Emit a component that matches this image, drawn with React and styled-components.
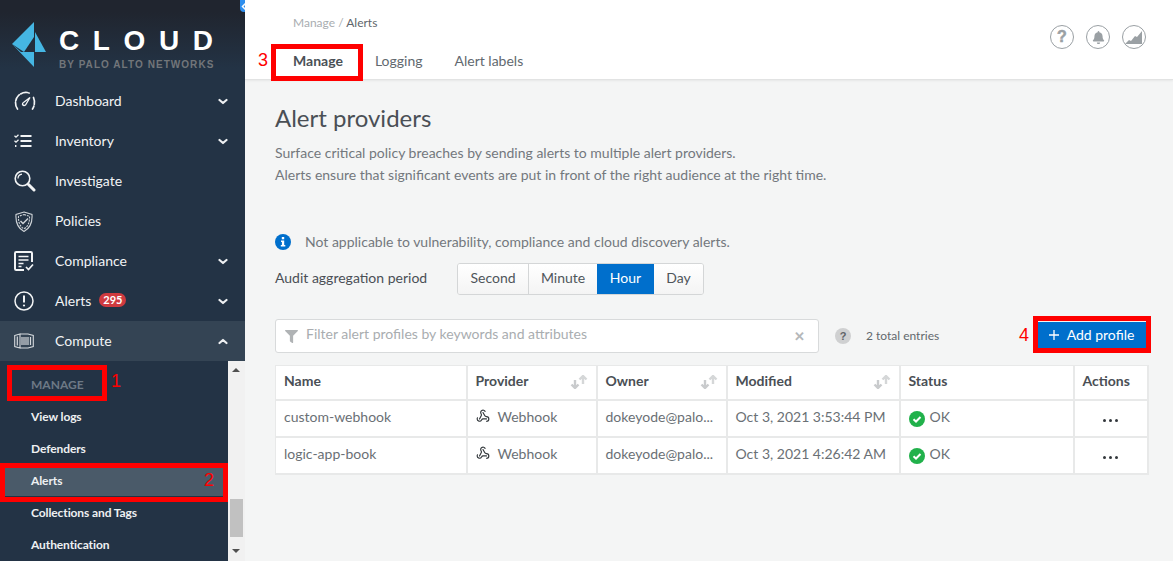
import React from "react";
import styled, { createGlobalStyle } from "styled-components";
import { FaFilter, FaBell } from "react-icons/fa";
import { Webhook } from "lucide-react";

const GlobalStyle = createGlobalStyle`
  html, body { margin: 0; padding: 0; height: 100%; overflow: hidden; }
  body { font-family: Lato, "Noto Sans", sans-serif; background: #f4f5f5; }
  * { box-sizing: border-box; }
`;

const Page = styled.div`
  position: relative;
  display: flex;
  width: 1173px;
  height: 561px;
  overflow: hidden;
`;

// sidebar
const Sidebar = styled.aside`
  width: 245px;
  flex: none;
  display: flex;
  flex-direction: column;
  background: #233345;
  color: #fff;
`;
const LogoArea = styled.div`
  height: 81px;
  flex: none;
  display: flex;
  gap: 12px;
  padding: 22px 0 0 12px;
  background: linear-gradient(#20252f 0%, #20252f 15%, #233345 85%);
`;
const LogoWords = styled.div`
  display: flex;
  flex-direction: column;
  padding-top: 5px;
`;
const LogoName = styled.div`
  font-family: "Liberation Sans", sans-serif;
  font-weight: 700;
  font-size: 28px;
  line-height: 28px;
  letter-spacing: 13.6px;
`;
const LogoSub = styled.div`
  font-family: "Liberation Sans", sans-serif;
  font-weight: 700;
  font-size: 10px;
  line-height: 12px;
  margin-top: 4px;
  letter-spacing: 1.05px;
  color: #72767a;
  white-space: nowrap;
`;
const NavRow = styled.div`
  height: 40px;
  flex: none;
  display: flex;
  align-items: center;
  padding: 0 17px 0 14px;
  font-size: 14px;
  color: #f2f4f5;
  background: ${(p) => (p.$open ? "#344454" : "transparent")};
`;
const NavIcon = styled.span`
  width: 41px;
  flex: none;
  display: flex;
  align-items: center;
`;
const NavLabel = styled.span`
  flex: 1;
  display: flex;
  align-items: center;
  gap: 8px;
  padding-bottom: 2px;
`;
const Badge = styled.span`
  background: #cf3a3f;
  color: #fff;
  font-size: 11px;
  font-weight: 700;
  line-height: 14px;
  padding: 0 4px;
  border-radius: 7px;
`;
const SubArea = styled.div`
  flex: 1;
  display: flex;
  min-height: 0;
`;
const SubList = styled.div`
  flex: 1;
  padding-top: 7px;
`;
const SubHead = styled.div`
  height: 32px;
  display: flex;
  align-items: center;
  padding-left: 31px;
  font-size: 12px;
  font-weight: 700;
  color: #6d7985;
`;
const SubItem = styled.div`
  height: 32px;
  display: flex;
  align-items: center;
  padding-left: 31px;
  font-size: 12px;
  font-weight: 700;
  letter-spacing: -0.1px;
  color: #eef0f2;
  background: ${(p) => (p.$active ? "#4a5a69" : "transparent")};
`;
const ScrollTrack = styled.div`
  position: relative;
  width: 17px;
  flex: none;
  background: #f1f1f1;
`;
const ScrollThumb = styled.div`
  position: absolute;
  left: 2px;
  right: 2px;
  bottom: 24px;
  height: 38px;
  background: #c1c1c1;
`;
const ScrollArrow = styled.div`
  position: absolute;
  left: 4px;
  width: 0;
  height: 0;
  border-left: 4px solid transparent;
  border-right: 4px solid transparent;
  ${(p) =>
    p.$down
      ? "bottom: 8px; border-top: 4px solid #505050;"
      : "top: 7px; border-bottom: 4px solid #505050;"}
`;
const Collapse = styled.div`
  position: absolute;
  left: 240px;
  top: 0;
  width: 8px;
  height: 12px;
  background: #2f8fee;
  border-radius: 0 0 4px 4px;
  display: flex;
  align-items: center;
  justify-content: center;
`;

// main column
const Main = styled.main`
  flex: 1;
  min-width: 0;
  display: flex;
  flex-direction: column;
`;
const Header = styled.header`
  position: relative;
  height: 80px;
  flex: none;
  background: #fff;
  border-bottom: 1px solid #e2e3e3;
  box-shadow: 0 1px 2px rgba(0, 0, 0, 0.06);
  padding: 15px 27px 0 48px;
  display: flex;
  justify-content: space-between;
`;
const Crumbs = styled.div`
  font-size: 12px;
  line-height: 15px;
  color: #a9adb1;
  b { font-weight: 400; color: #5f666c; }
`;
const Tabs = styled.nav`
  display: flex;
  gap: 32px;
  margin-top: 22px;
`;
const Tab = styled.span`
  font-size: 14px;
  line-height: 18px;
  font-weight: ${(p) => (p.$active ? 700 : 400)};
  color: ${(p) => (p.$active ? "#4a5056" : "#62696f")};
`;
const HeaderIcons = styled.div`
  display: flex;
  gap: 12px;
  margin-top: 10px;
`;
const RoundIcon = styled.span`
  width: 24px;
  height: 24px;
  border-radius: 50%;
  border: 1px solid #9aa0a4;
  color: #9aa0a4;
  display: flex;
  align-items: center;
  justify-content: center;
  font-family: "Liberation Sans", sans-serif;
  font-size: 16px;
  font-weight: 700;
  -webkit-text-stroke: 0.5px #9aa0a4;
  overflow: hidden;
`;
const Content = styled.section`
  flex: 1;
  padding: 23px 25px 0 30px;
  color: #6d7378;
`;
const Title = styled.h1`
  margin: 0;
  font-size: 24px;
  line-height: 30px;
  font-weight: 400;
  color: #4a4f55;
`;
const Lead = styled.p`
  margin: 9px 0 0;
  font-size: 14px;
  line-height: 22px;
  color: #73787d;
`;
const InfoLine = styled.div`
  display: flex;
  align-items: center;
  gap: 14px;
  margin-top: 46px;
  font-size: 14px;
  line-height: 20px;
  color: #73787d;
`;
const PeriodRow = styled.div`
  display: flex;
  align-items: center;
  margin-top: 11px;
  font-size: 14px;
  color: #4a4f55;
`;
const PeriodLabel = styled.span`
  width: 182px;
  padding-bottom: 3px;
`;
const Segments = styled.div`
  display: flex;
  height: 32px;
  border: 1px solid #d4d6d7;
  border-radius: 3px;
  overflow: hidden;
`;
const Segment = styled.span`
  display: flex;
  align-items: center;
  justify-content: center;
  width: ${(p) => p.$w}px;
  padding-bottom: 3px;
  font-size: 14px;
  color: ${(p) => (p.$on ? "#fff" : "#4f555a")};
  background: ${(p) => (p.$on ? "#006fcc" : "linear-gradient(#fff, #f4f4f4)")};
  border-left: ${(p) => (p.$first || p.$on ? "none" : "1px solid #d4d6d7")};
`;
const Toolbar = styled.div`
  display: flex;
  align-items: center;
  margin-top: 24px;
  height: 34px;
`;
const Filter = styled.div`
  width: 544px;
  height: 34px;
  flex: none;
  display: flex;
  align-items: center;
  gap: 8px;
  padding: 0 13px 0 9px;
  background: #fff;
  border: 1px solid #d8dadb;
  border-radius: 3px;
  font-size: 14px;
  color: #a9adb0;
`;
const FilterText = styled.span`
  flex: 1;
  padding-bottom: 5px;
`;
const FilterClear = styled.span`
  font-size: 13px;
  font-weight: 900;
  color: #b5b8ba;
`;
const HelpDot = styled.span`
  width: 16px;
  height: 16px;
  margin-left: 16px;
  border-radius: 50%;
  background: #cfd0d1;
  color: #5f6468;
  font-family: "Liberation Sans", sans-serif;
  font-size: 11px;
  font-weight: 700;
  display: flex;
  align-items: center;
  justify-content: center;
`;
const Total = styled.span`
  margin-left: 15px;
  flex: 1;
  padding-bottom: 1px;
  font-size: 12px;
  color: #62686d;
`;
const AddButton = styled.button`
  width: 109px;
  height: 29px;
  margin-right: 2px;
  border: none;
  background: #006fcc;
  color: #fff;
  font-family: inherit;
  font-size: 14px;
  display: flex;
  align-items: center;
  justify-content: center;
  gap: 8px;
  padding: 0 0 2px;
`;
const AddLabel = styled.span`
  padding-bottom: 2px;
`;
const Table = styled.table`
  width: 872px;
  margin-top: 12px;
  table-layout: fixed;
  border-collapse: collapse;
  background: #fff;
  font-size: 14px;
  color: #6a7075;
`;
const Th = styled.th`
  height: 34px;
  padding: 0 8px 3px;
  border: 1px solid #e8e9e9;
  border-width: 1px 2px 2px 1px;
  text-align: left;
  font-weight: 700;
  color: #4a4f55;
  width: ${(p) => p.$w}px;
`;
const ThInner = styled.span`
  display: flex;
  align-items: center;
  justify-content: space-between;
`;
const SortWrap = styled.span`
  display: flex;
  padding-top: 3px;
`;
const Td = styled.td`
  height: 37px;
  padding: 0 8px 4px;
  border: 1px solid #e8e9e9;
  border-width: 1px 2px 2px 1px;
  white-space: nowrap;
  overflow: hidden;
  text-overflow: ellipsis;
  text-align: ${(p) => (p.$center ? "center" : "left")};
`;
const Cell = styled.span`
  display: flex;
  align-items: center;
  gap: ${(p) => p.$gap}px;
`;
const StatusMark = styled.span`
  display: flex;
  margin-top: 5px;
`;
const Dots = styled.span`
  display: inline-flex;
  gap: 3px;
  i { width: 3px; height: 3px; border-radius: 50%; background: #33383c; }
`;

// annotations drawn over the screenshot
const RedBox = styled.div`
  position: absolute;
  left: ${(p) => p.$x}px;
  top: ${(p) => p.$y}px;
  width: ${(p) => p.$w}px;
  height: ${(p) => p.$h}px;
  border: 5px solid #ff0000;
`;
const RedNum = styled.span`
  position: absolute;
  left: ${(p) => p.$x}px;
  top: ${(p) => p.$y}px;
  font-family: "Liberation Sans", sans-serif;
  font-size: 18px;
  line-height: 20px;
  color: #ff0000;
`;

const Chevron = ({ up }) => (
  <svg width="10" height="7" viewBox="0 0 10 7" fill="none" stroke="#eef0f2" strokeWidth="2.2" strokeLinecap="round" strokeLinejoin="round">
    <path d={up ? "M1.500 5L5 2l3.500 3" : "M1.500 2L5 5l3.500-3"} />
  </svg>
);

const LogoMark = () => (
  <svg width="35" height="46" viewBox="0 0 35 46">
    <path fill="#45b6e3" d="M0 22L22 0v15L12 30z" />
    <path fill="#45b6e3" d="M23 10l11 20H23z" />
    <path fill="#45b6e3" d="M0 22l9 8h13v15z" />
  </svg>
);

const GaugeIcon = () => (
  <svg width="22" height="20" viewBox="0 0 22 20" fill="none" stroke="#f2f4f5" strokeWidth="1.700" strokeLinecap="round">
    <path d="M3.500 18C.5 14 1 8 4.500 4.500S13 1 15 2M19.500 6.500c1.500 3.500 1.300 8-1 11.500" strokeDasharray="7 1.600" />
    <path d="M8.500 13.500a2.200 2.200 0 0 0 3 .5l4.500-7.500-6.500 5a2 2 0 0 0-1 2z" strokeWidth="1.300" />
  </svg>
);
const ListIcon = () => (
  <svg width="18" height="14" viewBox="0 0 18 14" fill="none" stroke="#f2f4f5" strokeWidth="2">
    <path d="M6.500 2H17.500M6.500 7H17.500M6.500 12H17.500" />
    <path d="M.5 1.800L2 3.200 4.500.8" strokeWidth="1.300" />
    <path d="M.5 6.800L2 8.200 4.500 5.800" strokeWidth="1.300" />
    <path d="M1 12h2" strokeDasharray="1.400 1" />
  </svg>
);
const SearchIcon = () => (
  <svg width="22" height="22" viewBox="0 0 22 22" fill="none" stroke="#f2f4f5">
    <circle cx="8.500" cy="8.500" r="7.300" strokeWidth="1.600" />
    <path d="M4 8.500a4.500 4.500 0 0 1 4-4.400" strokeWidth="1.200" />
    <path d="M14.500 14.500l5.500 5.500" strokeWidth="3" strokeLinecap="round" />
  </svg>
);
const ShieldIcon = () => (
  <svg width="20" height="21" viewBox="0 0 20 21" fill="none" stroke="#cfd4d8" strokeWidth="1.100">
    <path d="M10 1l8 2.500c.5 7-1.500 13.500-8 17C3.500 17 1.500 10.500 2 3.500z" />
    <path d="M10 3.500l5.500 1.800c.3 5-1 10-5.500 12.500C5.500 15.300 4.200 10.300 4.500 5.300z" strokeDasharray="2 1" />
    <path d="M6.500 10l2.500 2.500L14 7.500" strokeWidth="1.500" />
  </svg>
);
const ComplianceIcon = () => (
  <svg width="20" height="20" viewBox="0 0 20 20" fill="none" stroke="#f2f4f5">
    <path d="M10 19H2.200A1.200 1.200 0 0 1 1 17.800V2.200A1.200 1.200 0 0 1 2.200 1h14.600A1.200 1.200 0 0 1 18 2.200V11" strokeWidth="2" />
    <path d="M4.500 5.500h10M4.500 9h10M4.500 12.500h5M4.500 15.500h3" strokeWidth="1.700" />
    <path d="M12 16l2.500 2.500L19 13.500" strokeWidth="1.700" />
  </svg>
);
const AlertIcon = () => (
  <svg width="20" height="20" viewBox="0 0 20 20" fill="none" stroke="#f2f4f5">
    <circle cx="10" cy="10" r="9" strokeWidth="1.500" />
    <path d="M10 4.500v7" strokeWidth="2" />
    <circle cx="10" cy="14.500" r="1.100" fill="#f2f4f5" stroke="none" />
  </svg>
);
const ContainerIcon = () => (
  <svg width="20" height="16" viewBox="0 0 20 16" fill="none" stroke="#d5d9dd" strokeWidth="1.100">
    <path d="M.7 2.500L6 1v14l-5.300-1.500zM6 1h8l5.300 1.500v11L14 15H6" />
    <path d="M8 4v8M10 4v8M12 4v8M14 4v8M16.500 4v8M3.300 3.500v9" strokeWidth="1.200" />
  </svg>
);

const SortIcon = () => (
  <svg width="18" height="14" viewBox="0 0 18 14" fill="none" strokeWidth="2.400">
    <path d="M5 5v8M1.500 9.500L5 13l3.500-3.500" stroke="#c9cbcd" />
    <path d="M13 9V1M9.500 4.500L13 1l3.500 3.500" stroke="#d5d7d8" />
  </svg>
);
const OkIcon = () => (
  <svg width="16" height="16" viewBox="0 0 16 16">
    <circle cx="8" cy="8" r="8" fill="#21b14b" />
    <path d="M4.500 8.200l2.500 2.300 4.500-4.500" fill="none" stroke="#fff" strokeWidth="2" />
  </svg>
);
const InfoIcon = () => (
  <svg width="16" height="16" viewBox="0 0 16 16">
    <circle cx="8" cy="8" r="8" fill="#006fcc" />
    <rect x="6.800" y="3" width="2.400" height="2.300" fill="#fff" />
    <path d="M6 6.500h3.200V11H10.300v1.500H5.800V11H6.900V8H6z" fill="#fff" />
  </svg>
);
const AreaIcon = () => (
  <svg width="22" height="22" viewBox="0 0 22 22">
    <path d="M2 18l4-4 2 1 4-5 2 1 5-6v13z" fill="#9aa0a4" />
  </svg>
);

const navItems = [
  { label: "Dashboard", icon: <GaugeIcon />, more: true },
  { label: "Inventory", icon: <ListIcon />, more: true },
  { label: "Investigate", icon: <SearchIcon /> },
  { label: "Policies", icon: <ShieldIcon /> },
  { label: "Compliance", icon: <ComplianceIcon />, more: true },
  { label: "Alerts", icon: <AlertIcon />, more: true, badge: "295" },
  { label: "Compute", icon: <ContainerIcon />, more: true, open: true },
];
const subItems = ["View logs", "Defenders", "Alerts", "Collections and Tags", "Authentication"];
const rows = [
  { name: "custom-webhook", modified: "Oct 3, 2021 3:53:44 PM" },
  { name: "logic-app-book", modified: "Oct 3, 2021 4:26:42 AM" },
];

export default function App() {
  return (
    <Page>
      <GlobalStyle />
      <Sidebar>
        <LogoArea>
          <LogoMark />
          <LogoWords>
            <LogoName>CLOUD</LogoName>
            <LogoSub>BY PALO ALTO NETWORKS</LogoSub>
          </LogoWords>
        </LogoArea>
        {navItems.map((item) => (
          <NavRow key={item.label} $open={item.open}>
            <NavIcon>{item.icon}</NavIcon>
            <NavLabel>
              {item.label}
              {item.badge && <Badge>{item.badge}</Badge>}
            </NavLabel>
            {item.more && <Chevron up={item.open} />}
          </NavRow>
        ))}
        <SubArea>
          <SubList>
            <SubHead>MANAGE</SubHead>
            {subItems.map((s) => (
              <SubItem key={s} $active={s === "Alerts"}>{s}</SubItem>
            ))}
          </SubList>
          <ScrollTrack>
            <ScrollArrow />
            <ScrollThumb />
            <ScrollArrow $down />
          </ScrollTrack>
        </SubArea>
      </Sidebar>
      <Collapse>
        <svg width="6" height="9" viewBox="0 0 6 9" fill="none" stroke="#fff" strokeWidth="1.500">
          <path d="M5 1L1.500 4.500 5 8" />
        </svg>
      </Collapse>

      <Main>
        <Header>
          <div>
            <Crumbs>Manage / <b>Alerts</b></Crumbs>
            <Tabs>
              <Tab $active>Manage</Tab>
              <Tab>Logging</Tab>
              <Tab>Alert labels</Tab>
            </Tabs>
          </div>
          <HeaderIcons>
            <RoundIcon>?</RoundIcon>
            <RoundIcon><FaBell size={13} /></RoundIcon>
            <RoundIcon><AreaIcon /></RoundIcon>
          </HeaderIcons>
        </Header>
        <Content>
          <Title>Alert providers</Title>
          <Lead>
            Surface critical policy breaches by sending alerts to multiple alert providers.
            <br />
            Alerts ensure that significant events are put in front of the right audience at the right time.
          </Lead>
          <InfoLine>
            <InfoIcon />
            Not applicable to vulnerability, compliance and cloud discovery alerts.
          </InfoLine>
          <PeriodRow>
            <PeriodLabel>Audit aggregation period</PeriodLabel>
            <Segments>
              <Segment $w={70} $first>Second</Segment>
              <Segment $w={69}>Minute</Segment>
              <Segment $w={57} $on>Hour</Segment>
              <Segment $w={49} $first>Day</Segment>
            </Segments>
          </PeriodRow>
          <Toolbar>
            <Filter>
              <FaFilter size={13} color="#b0b3b5" />
              <FilterText>Filter alert profiles by keywords and attributes</FilterText>
              <FilterClear>✕</FilterClear>
            </Filter>
            <HelpDot>?</HelpDot>
            <Total>2 total entries</Total>
            <AddButton>
              <svg width="10" height="10" viewBox="0 0 10 10" stroke="#fff" strokeWidth="1.300"><path d="M5 0v10M0 5h10" /></svg>
              <AddLabel>Add profile</AddLabel>
            </AddButton>
          </Toolbar>
          <Table>
            <thead>
              <tr>
                <Th $w={191}>Name</Th>
                <Th $w={130}><ThInner>Provider <SortWrap><SortIcon /></SortWrap></ThInner></Th>
                <Th $w={130}><ThInner>Owner <SortWrap><SortIcon /></SortWrap></ThInner></Th>
                <Th $w={173}><ThInner>Modified <SortWrap><SortIcon /></SortWrap></ThInner></Th>
                <Th $w={174}>Status</Th>
                <Th $w={74}>Actions</Th>
              </tr>
            </thead>
            <tbody>
              {rows.map((r) => (
                <tr key={r.name}>
                  <Td>{r.name}</Td>
                  <Td>
                    <Cell $gap={8}>
                      <Webhook size={14} color="#33383c" />
                      Webhook
                    </Cell>
                  </Td>
                  <Td>dokeyode@palo...</Td>
                  <Td>{r.modified}</Td>
                  <Td>
                    <Cell $gap={5}>
                      <StatusMark><OkIcon /></StatusMark>
                      OK
                    </Cell>
                  </Td>
                  <Td $center>
                    <Dots><i /><i /><i /></Dots>
                  </Td>
                </tr>
              ))}
            </tbody>
          </Table>
        </Content>
      </Main>

      <RedBox $x={7} $y={365} $w={100} $h={36} />
      <RedNum $x={111} $y={371}>1</RedNum>
      <RedBox $x={0} $y={463} $w={228} $h={39} />
      <RedNum $x={204} $y={470}>2</RedNum>
      <RedBox $x={271} $y={44} $w={92} $h={37} />
      <RedNum $x={258} $y={50}>3</RedNum>
      <RedBox $x={1033} $y={316} $w={118} $h={37} />
      <RedNum $x={1019} $y={325}>4</RedNum>
    </Page>
  );
}
